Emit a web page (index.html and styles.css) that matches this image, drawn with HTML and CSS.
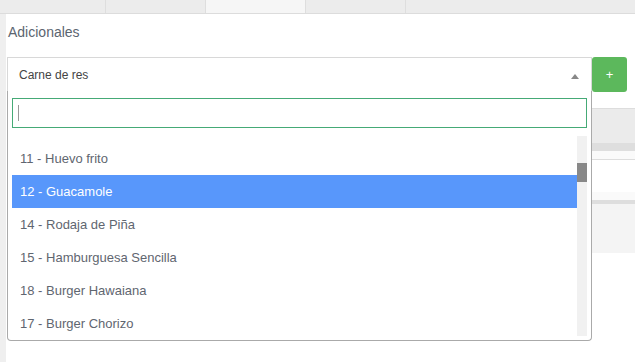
FILE: index.html
```html
<!DOCTYPE html>
<html lang="es">
<head>
    <meta charset="UTF-8">
    <meta name="viewport" content="width=device-width, initial-scale=1.0">
    <title>Adicionales</title>
    <link rel="stylesheet" href="styles.css">
</head>
<body>
    <nav class="tabs">
        <div class="tab"></div>
        <div class="tab"></div>
        <div class="tab active"></div>
        <div class="tab"></div>
        <div class="tab rest"></div>
    </nav>
    <div class="panel">
        <h3 class="heading">Adicionales</h3>
        <div class="select-row">
            <div class="select">
                <span class="select-value">Carne de res</span>
                <span class="select-arrow"></span>
            </div>
            <button type="button" class="btn-add">+</button>
        </div>

        <div class="table">
            <div class="table-head"></div>
            <div class="table-sep"></div>
            <div class="table-stripe"></div>
            <div class="table-row"></div>
            <div class="table-stripe"></div>
            <div class="table-sep short"></div>
            <div class="table-foot"></div>
        </div>

        <div class="dropdown">
            <div class="search">
                <div class="search-input"><span class="caret"></span></div>
            </div>
            <div class="results">
                <ul class="options">
                    <li>11 - Huevo frito</li>
                    <li class="highlighted">12 - Guacamole</li>
                    <li>14 - Rodaja de Piña</li>
                    <li>15 - Hamburguesa Sencilla</li>
                    <li>18 - Burger Hawaiana</li>
                    <li>17 - Burger Chorizo</li>
                </ul>
                <div class="scrollbar"><div class="thumb"></div></div>
            </div>
        </div>
    </div>
</body>
</html>
```

FILE: styles.css
```css
body {
    font-family: "Liberation Sans", Arial, sans-serif;
    margin: 0;
    padding: 0;
    background-color: #efefef;
    color: #555;
    height: 362px;
    overflow: hidden;
}
.tabs {
    display: flex;
    height: 13px;
    border-bottom: 1px solid #dcdcdc;
    background-color: #ececec;
}
.tab {
    width: 99px;
    border-right: 1px solid #dedede;
}
.tab:first-child {
    width: 105px;
}
.tab.active {
    background-color: #f6f6f6;
}
.tab.rest {
    flex: 1;
    border-right: none;
}
.panel {
    position: relative;
    margin-left: 6px;
    height: 348px;
    background-color: #ffffff;
    padding-left: 1px;
}
.heading {
    margin: 0;
    padding: 8px 0 0 1px;
    font-size: 14px;
    font-weight: normal;
    line-height: 20px;
    color: #5b6570;
}
.select-row {
    display: flex;
    margin-top: 15px;
}
.select {
    height: 33px;
    border: 1px solid #d8d8d8;
    display: flex;
    align-items: center;
    justify-content: space-between;
    padding: 0 12px 0 11px;
    width: 560px;
}
.select-value {
    font-size: 12px;
    color: #444;
}
.select-arrow {
    width: 0;
    height: 0;
    border-left: 4px solid transparent;
    border-right: 4px solid transparent;
    border-bottom: 5px solid #888;
    margin-top: 3px;
}
.btn-add {
    width: 35px;
    height: 35px;
    padding: 0;
    border: none;
    border-radius: 3px;
    background-color: #5cb85c;
    color: #ffffff;
    font-family: "Liberation Sans", Arial, sans-serif;
    font-size: 13px;
    line-height: 35px;
}
.table {
    margin-top: 16px;
    border-top: 1px solid #dddddd;
}
.table-head {
    height: 34px;
    background-color: #ebebeb;
}
.table-sep {
    height: 8px;
    background-color: #dedede;
}
.table-sep.short {
    height: 4px;
}
.table-stripe {
    height: 8px;
    background-color: #fafafa;
}
.table-row {
    height: 32px;
    border-top: 1px solid #dddddd;
    background-color: #ffffff;
}
.table-foot {
    height: 49px;
    background-color: #f4f4f4;
}

/* open select2-style dropdown */
.dropdown {
    position: absolute;
    top: 77px;
    left: 1px;
    width: 583px;
    height: 249px;
    background-color: #ffffff;
    border: 1px solid #aaaaaa;
    border-top: none;
    border-radius: 0 0 4px 4px;
}
.search {
    padding: 7px 4px 0 4px;
}
.search-input {
    height: 28px;
    border: 1px solid #45aa76;
    display: flex;
    align-items: center;
    padding-left: 5px;
}
.caret {
    width: 1px;
    height: 16px;
    background-color: #999;
}
.results {
    display: flex;
    height: 200px;
    margin: 8px 4px 0 4px;
    overflow: hidden;
}
.options {
    flex: 1;
    list-style: none;
    margin: 0;
    padding: 6px 0 0;
}
.options li {
    height: 33px;
    line-height: 33px;
    padding-left: 8px;
    font-size: 13px;
    color: #5f6670;
}
.options li.highlighted {
    background-color: #5897fb;
    color: #ffffff;
}
.scrollbar {
    width: 10px;
    background-color: #f1f1f1;
}
.thumb {
    margin-top: 27px;
    height: 19px;
    background-color: #888888;
}
```
